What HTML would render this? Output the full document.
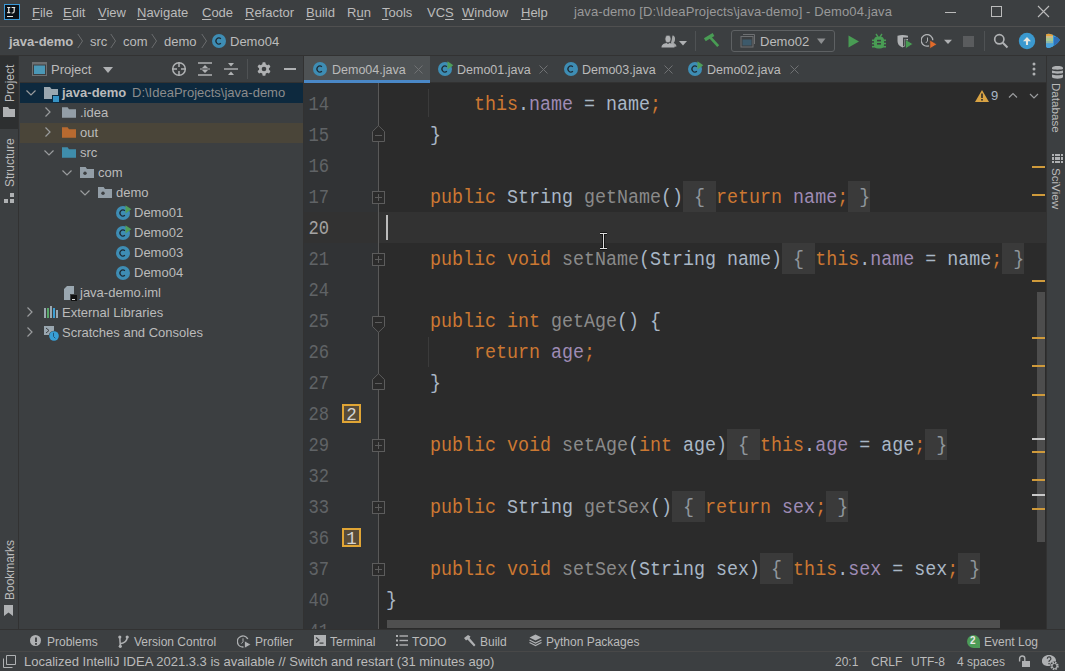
<!DOCTYPE html><html><head><meta charset="utf-8"><style>
*{margin:0;padding:0;box-sizing:border-box}
html,body{width:1065px;height:671px;overflow:hidden;background:#3c3f41}
body{position:relative;font-family:"Liberation Sans",sans-serif;font-size:13px;color:#bbbbbb}
.a{position:absolute}
.txt{position:absolute;white-space:pre;line-height:16px}
.mono{font-family:"Liberation Mono",monospace}
.code{position:absolute;white-space:pre;font-family:"Liberation Mono",monospace;font-size:19.5px;line-height:31px;height:31px;transform:scaleX(0.9402);transform-origin:0 0}
.ln{position:absolute;white-space:pre;font-family:"Liberation Mono",monospace;font-size:19.5px;line-height:31px;height:31px;transform:scaleX(0.88);transform-origin:100% 0}
.k{color:#cc7832}.t{color:#a9b7c6}.g{color:#8a8a8a}.f{color:#9f8bb5}
.b{color:#8f969c}
.u{text-decoration:underline;text-underline-offset:2px}
.vt{position:absolute;white-space:pre;transform-origin:0 0}
</style></head><body>
<div class="a" style="left:0;top:0;width:1065px;height:26px;background:#3c3f41"></div>
<div class="a" style="left:0;top:26px;width:1065px;height:1px;background:#505050"></div>
<svg class="a" style="left:4px;top:4px" width="16" height="16" viewBox="0 0 16 16"><rect x="0.5" y="0.5" width="15" height="15" fill="#0b1117" stroke="#3b9ad9"/><path d="M3.2 3.5H6.3M4.75 3.5V8.5M3.2 8.7H6.3" stroke="#e6e6e0" stroke-width="1.2" fill="none"/><path d="M7.6 3.5H11.2M10.2 3.5V7.3Q10.2 9 8.6 9H7.6" stroke="#e6e6e0" stroke-width="1.2" fill="none"/><rect x="3" y="12" width="6" height="1" fill="#e6e6e0"/></svg>
<div class="txt" style="left:32px;top:5px;color:#bbbbbb"><span class="u">F</span>ile</div>
<div class="txt" style="left:63px;top:5px;color:#bbbbbb"><span class="u">E</span>dit</div>
<div class="txt" style="left:98px;top:5px;color:#bbbbbb"><span class="u">V</span>iew</div>
<div class="txt" style="left:137px;top:5px;color:#bbbbbb"><span class="u">N</span>avigate</div>
<div class="txt" style="left:202px;top:5px;color:#bbbbbb"><span class="u">C</span>ode</div>
<div class="txt" style="left:245px;top:5px;color:#bbbbbb"><span class="u">R</span>efactor</div>
<div class="txt" style="left:306px;top:5px;color:#bbbbbb"><span class="u">B</span>uild</div>
<div class="txt" style="left:347px;top:5px;color:#bbbbbb">R<span class="u">u</span>n</div>
<div class="txt" style="left:382px;top:5px;color:#bbbbbb"><span class="u">T</span>ools</div>
<div class="txt" style="left:427px;top:5px;color:#bbbbbb">VC<span class="u">S</span></div>
<div class="txt" style="left:462px;top:5px;color:#bbbbbb"><span class="u">W</span>indow</div>
<div class="txt" style="left:521px;top:5px;color:#bbbbbb"><span class="u">H</span>elp</div>
<div class="txt" style="left:574px;top:4px;color:#999999;letter-spacing:0.1px">java-demo [D:\IdeaProjects\java-demo] - Demo04.java</div>
<div class="a" style="left:945px;top:12px;width:11px;height:1px;background:#bbb"></div>
<div class="a" style="left:991px;top:6px;width:11px;height:11px;border:1px solid #bbb"></div>
<svg class="a" style="left:1037px;top:5px" width="13" height="13" viewBox="0 0 13 13"><path d="M1 1L12 12M12 1L1 12" stroke="#bbb" stroke-width="1.1"/></svg>
<div class="a" style="left:0;top:55px;width:1065px;height:1px;background:#323232"></div>
<div class="txt" style="left:9px;top:34px;font-weight:bold">java-demo</div>
<svg class="a" style="left:77px;top:33px" width="7" height="16" viewBox="0 0 7 16"><path d="M0.8 1L5.5 8L0.8 15" stroke="#6a6c6e" fill="none" stroke-width="1"/></svg>
<div class="txt" style="left:90px;top:34px">src</div>
<svg class="a" style="left:110px;top:33px" width="7" height="16" viewBox="0 0 7 16"><path d="M0.8 1L5.5 8L0.8 15" stroke="#6a6c6e" fill="none" stroke-width="1"/></svg>
<div class="txt" style="left:123px;top:34px">com</div>
<svg class="a" style="left:151px;top:33px" width="7" height="16" viewBox="0 0 7 16"><path d="M0.8 1L5.5 8L0.8 15" stroke="#6a6c6e" fill="none" stroke-width="1"/></svg>
<div class="txt" style="left:164px;top:34px">demo</div>
<svg class="a" style="left:201px;top:33px" width="7" height="16" viewBox="0 0 7 16"><path d="M0.8 1L5.5 8L0.8 15" stroke="#6a6c6e" fill="none" stroke-width="1"/></svg>
<svg class="a" style="left:210.5px;top:32px" width="18" height="18" viewBox="0 0 18 18"><circle cx="8" cy="9" r="7" fill="#3e8db4"/><path d="M9.9 6.7A3 3 0 1 0 9.9 11.3" stroke="#1d2a33" stroke-width="1.25" fill="none"/></svg>
<div class="txt" style="left:230px;top:34px">Demo04</div>
<svg class="a" style="left:660px;top:34px" width="30" height="15" viewBox="0 0 30 15"><path d="M12.5 1.5C14.8 1.5 15.3 4 15 6C14.7 7.8 14 8.5 13.6 9C15 9.6 16.5 10.5 16.5 12.5L13 13L11 9Z" fill="#afb1b3" opacity="0.9"/><ellipse cx="8" cy="5" rx="3.1" ry="3.9" fill="#afb1b3" stroke="#3c3f41" stroke-width="0.8"/><path d="M1.5 13.5C1.5 10.5 4 9.5 6.5 9L8 10L9.5 9C12 9.5 14.5 10.5 14.5 13.5Z" fill="#afb1b3"/><path d="M19 7L27 7L23 11.5Z" fill="#afb1b3"/></svg>
<div class="a" style="left:695px;top:31px;width:1px;height:20px;background:#4f5254"></div>
<svg class="a" style="left:703px;top:33px" width="17" height="16" viewBox="0 0 17 16"><path d="M1.8 6.8L10.5 1.5" stroke="#499c54" stroke-width="3.4"/><path d="M7 4.2L15.2 13.2" stroke="#499c54" stroke-width="2.7"/></svg>
<div class="a" style="left:731px;top:30px;width:104px;height:22px;border:1px solid #5e6163;border-radius:3px"></div>
<svg class="a" style="left:740px;top:33px" width="16" height="16" viewBox="0 0 16 16"><path d="M3 1.5H14.5V11" stroke="#6e7072" fill="none"/><rect x="1" y="3.5" width="12" height="10.5" fill="#3c3f41" stroke="#6e7072"/><rect x="2.5" y="6.5" width="9" height="6" fill="#3d5a6b"/></svg>
<div class="txt" style="left:760px;top:34px">Demo02</div>
<svg class="a" style="left:816px;top:37px" width="11" height="8" viewBox="0 0 11 8"><path d="M1 1.5L9.5 1.5L5.25 7Z" fill="#8c8e90"/></svg>
<svg class="a" style="left:848px;top:35px" width="12" height="13" viewBox="0 0 12 13"><path d="M0.5 0.5L11 6.5L0.5 12.5Z" fill="#499c54"/></svg>
<svg class="a" style="left:872px;top:33px" width="14" height="16" viewBox="0 0 14 16"><path d="M4 1L6 3.8M10 1L8 3.8" stroke="#499c54" stroke-width="1.4"/><rect x="2" y="3.5" width="10" height="12" rx="4" fill="#499c54"/><g fill="#499c54"><rect x="0" y="6.5" width="14" height="1.6"/><rect x="0" y="9.7" width="14" height="1.6"/><rect x="0" y="12.9" width="14" height="1.6"/></g><rect x="5" y="6.8" width="4" height="1.6" fill="#3c3f41"/><rect x="5" y="10" width="4" height="1.6" fill="#3c3f41"/></svg>
<svg class="a" style="left:897px;top:34px" width="17" height="16" viewBox="0 0 17 16"><path d="M0.5 1.8Q5.5 0 11 1.8V7Q11 11.5 5.5 13.5Q0.5 11.5 0.5 7Z" fill="#afb1b3"/><path d="M6 3.5H11V5H7.5V11.5L6 12.5Z" fill="#3c3f41"/><path d="M8.5 5.5L16 10L8.5 14.8Z" fill="#499c54" stroke="#3c3f41" stroke-width="0.8"/></svg>
<svg class="a" style="left:921px;top:34px" width="17" height="16" viewBox="0 0 17 16"><path d="M11.8 6.2A5.8 5.8 0 1 0 8 11.8" stroke="#afb1b3" stroke-width="1.3" fill="none"/><path d="M6.5 3.5V7L4.8 9" stroke="#afb1b3" stroke-width="1" fill="none"/><path d="M8.8 6L16 10.3L8.8 14.8Z" fill="#e26b2a" stroke="#3c3f41" stroke-width="0.8"/></svg>
<svg class="a" style="left:943px;top:38px" width="10" height="8" viewBox="0 0 10 8"><path d="M1 1.8L9 1.8L5 6Z" fill="#afb1b3"/></svg>
<div class="a" style="left:963px;top:36px;width:11px;height:11px;background:#5a5c5e"></div>
<div class="a" style="left:984px;top:31px;width:1px;height:20px;background:#4f5254"></div>
<svg class="a" style="left:993px;top:33px" width="16" height="16" viewBox="0 0 16 16"><circle cx="6.3" cy="6.3" r="4.6" fill="none" stroke="#afb1b3" stroke-width="1.7"/><path d="M9.8 9.8L14.5 14.5" stroke="#afb1b3" stroke-width="2"/></svg>
<svg class="a" style="left:1018px;top:32px" width="18" height="18" viewBox="0 0 18 18"><circle cx="9" cy="9" r="8.2" fill="#3b99cf"/><path d="M9 13V7.5" stroke="#e6e6df" stroke-width="2.1"/><path d="M5 9.2L9 5L13 9.2Z" fill="#e6e6df"/></svg>
<svg class="a" style="left:1045px;top:33px" width="16" height="16" viewBox="0 0 16 16"><defs><clipPath id="tb"><path d="M1 1.5Q2 0.5 4 0.7Q10 1.5 15 7Q11 13 4 15Q1.5 15 1 13.5Z"/></clipPath></defs><g clip-path="url(#tb)"><rect x="0" y="0" width="16" height="16" fill="#3a9ad6"/><rect x="9" y="4" width="7" height="8" fill="#2f6fb8"/><rect x="0" y="0" width="8" height="3" fill="#e6a23a"/><rect x="0" y="3" width="8" height="2" fill="#cbb98a"/><rect x="0" y="5" width="8" height="3" fill="#a8c88e"/><rect x="0" y="8" width="8" height="2.5" fill="#8fb7a8"/><rect x="0" y="10.5" width="8" height="5" fill="#4aa3dc"/></g></svg>
<div class="a" style="left:0;top:56px;width:19px;height:573px;background:#3c3f41"></div>
<div class="a" style="left:0;top:56px;width:18px;height:73px;background:#2d2f30"></div>
<div class="a" style="left:18px;top:56px;width:1px;height:573px;background:#323232"></div>
<div class="vt" style="left:3px;top:102px;transform:rotate(-90deg);color:#bbbbbb;line-height:14px;font-size:12px">Project</div>
<svg class="a" style="left:2px;top:106px" width="14" height="12" viewBox="0 0 14 12"><path d="M1 1H6L7.5 3H13V11H1Z" fill="#afb1b3"/></svg>
<div class="vt" style="left:3px;top:187px;transform:rotate(-90deg);color:#bbbbbb;line-height:14px;font-size:12px">Structure</div>
<svg class="a" style="left:3px;top:192px" width="12" height="12" viewBox="0 0 12 12"><g fill="#afb1b3"><rect x="7" y="1" width="4" height="4"/><rect x="1" y="7" width="4" height="4"/><rect x="7" y="7" width="4" height="4"/></g></svg>
<div class="vt" style="left:3px;top:600px;transform:rotate(-90deg);color:#bbbbbb;line-height:14px;font-size:12px">Bookmarks</div>
<svg class="a" style="left:4px;top:605px" width="9" height="12" viewBox="0 0 9 12"><path d="M0 0H9V11L4.5 7.5L0 11Z" fill="#afb1b3"/></svg>
<div class="a" style="left:20px;top:56px;width:283px;height:573px;background:#3c3f41"></div>
<div class="a" style="left:303px;top:56px;width:1px;height:573px;background:#323232"></div>
<svg class="a" style="left:32px;top:62px" width="15" height="14" viewBox="0 0 15 14"><rect x="0.5" y="0.5" width="14" height="13" fill="none" stroke="#6e7072"/><rect x="0.5" y="0.5" width="14" height="2" fill="#6e7072"/><rect x="2" y="3.5" width="11" height="8.5" fill="#4b98b7"/></svg>
<div class="txt" style="left:51px;top:62px">Project</div>
<svg class="a" style="left:103px;top:66px" width="10" height="8" viewBox="0 0 10 8"><path d="M0 1H10L5 7Z" fill="#afb1b3"/></svg>
<svg class="a" style="left:171px;top:61px" width="16" height="16" viewBox="0 0 16 16"><circle cx="8" cy="8" r="6.3" fill="none" stroke="#afb1b3" stroke-width="1.5"/><path d="M8 1V6M8 10V15M1 8H6M10 8H15" stroke="#afb1b3" stroke-width="1.5"/></svg>
<svg class="a" style="left:198px;top:62px" width="14" height="14" viewBox="0 0 14 14"><path d="M0 1H14M0 13H14" stroke="#afb1b3" stroke-width="1.4"/><path d="M4 6L7 3L10 6Z M4 8L7 11L10 8Z" fill="#afb1b3"/><path d="M2 7H12" stroke="#afb1b3" stroke-width="1"/></svg>
<svg class="a" style="left:224px;top:62px" width="14" height="14" viewBox="0 0 14 14"><path d="M0 7H14" stroke="#afb1b3" stroke-width="1.4"/><path d="M4 1L7 4.5L10 1Z M4 13L7 9.5L10 13Z" fill="#afb1b3"/></svg>
<div class="a" style="left:247px;top:59px;width:1px;height:20px;background:#4f5254"></div>
<svg class="a" style="left:257px;top:62px" width="14" height="14" viewBox="0 0 14 14"><g fill="#afb1b3"><circle cx="7" cy="7" r="5"/><rect x="5.4" y="0.3" width="3.2" height="13.4" rx="0.8"/><rect x="5.4" y="0.3" width="3.2" height="13.4" rx="0.8" transform="rotate(60 7 7)"/><rect x="5.4" y="0.3" width="3.2" height="13.4" rx="0.8" transform="rotate(120 7 7)"/></g><circle cx="7" cy="7" r="2.3" fill="#3c3f41"/></svg>
<div class="a" style="left:284px;top:68px;width:12px;height:2px;background:#afb1b3"></div>
<div class="a" style="left:20px;top:82px;width:283px;height:1px;background:#323232"></div>
<div class="a" style="left:20px;top:83px;width:283px;height:20px;background:#0d293e"></div>
<div class="a" style="left:20px;top:123px;width:283px;height:20px;background:#4a4539"></div>
<svg class="a" style="left:26px;top:90px" width="10" height="6" viewBox="0 0 10 6"><path d="M0.5 0.5L5 5L9.5 0.5" stroke="#9a9c9e" fill="none" stroke-width="1.2"/></svg>
<svg class="a" style="left:44px;top:87px" width="15" height="15" viewBox="0 0 15 15"><path d="M0 0H6L7.5 2H14V12H0Z" fill="#9aa7b0"/><rect x="8" y="8" width="7" height="7" fill="#0d293e"/><rect x="9" y="9" width="6" height="6" fill="#3592c4"/></svg>
<div class="txt" style="left:62px;top:85px;font-weight:bold">java-demo</div>
<div class="txt" style="left:132px;top:85px;color:#8c8c8c">D:\IdeaProjects\java-demo</div>
<svg class="a" style="left:45px;top:107px" width="6" height="10" viewBox="0 0 6 10"><path d="M0.5 0.5L5 5L0.5 9.5" stroke="#9a9c9e" fill="none" stroke-width="1.2"/></svg>
<svg class="a" style="left:62px;top:107px" width="14" height="11" viewBox="0 0 15 11"><path d="M0 0H6L7.5 2H15V11H0Z" fill="#939ea7"/></svg>
<div class="txt" style="left:80px;top:105px">.idea</div>
<svg class="a" style="left:45px;top:127px" width="6" height="10" viewBox="0 0 6 10"><path d="M0.5 0.5L5 5L0.5 9.5" stroke="#9a9c9e" fill="none" stroke-width="1.2"/></svg>
<svg class="a" style="left:62px;top:127px" width="14" height="11" viewBox="0 0 15 11"><path d="M0 0H6L7.5 2H15V11H0Z" fill="#b86a30"/></svg>
<div class="txt" style="left:80px;top:125px">out</div>
<svg class="a" style="left:44px;top:150px" width="10" height="6" viewBox="0 0 10 6"><path d="M0.5 0.5L5 5L9.5 0.5" stroke="#9a9c9e" fill="none" stroke-width="1.2"/></svg>
<svg class="a" style="left:62px;top:147px" width="14" height="11" viewBox="0 0 15 11"><path d="M0 0H6L7.5 2H15V11H0Z" fill="#3f8dab"/></svg>
<div class="txt" style="left:80px;top:145px">src</div>
<svg class="a" style="left:62px;top:170px" width="10" height="6" viewBox="0 0 10 6"><path d="M0.5 0.5L5 5L9.5 0.5" stroke="#9a9c9e" fill="none" stroke-width="1.2"/></svg>
<svg class="a" style="left:80px;top:167px" width="14" height="11" viewBox="0 0 14 11"><path d="M0 0H5.6L7 2H14V11H0Z" fill="#939ea7"/><circle cx="5" cy="6.3" r="1.7" fill="#3c3f41"/></svg>
<div class="txt" style="left:98px;top:165px">com</div>
<svg class="a" style="left:80px;top:190px" width="10" height="6" viewBox="0 0 10 6"><path d="M0.5 0.5L5 5L9.5 0.5" stroke="#9a9c9e" fill="none" stroke-width="1.2"/></svg>
<svg class="a" style="left:98px;top:187px" width="14" height="11" viewBox="0 0 14 11"><path d="M0 0H5.6L7 2H14V11H0Z" fill="#939ea7"/><circle cx="5" cy="6.3" r="1.7" fill="#3c3f41"/></svg>
<div class="txt" style="left:116px;top:185px">demo</div>
<svg class="a" style="left:115px;top:204px" width="18" height="18" viewBox="0 0 18 18"><circle cx="8" cy="9" r="7" fill="#3e8db4"/><path d="M9.9 6.7A3 3 0 1 0 9.9 11.3" stroke="#1d2a33" stroke-width="1.25" fill="none"/><path d="M10.5 1.2L16.3 5.3L10.5 9.4Z" fill="#4f9e5a"/></svg>
<div class="txt" style="left:134px;top:205px">Demo01</div>
<svg class="a" style="left:115px;top:224px" width="18" height="18" viewBox="0 0 18 18"><circle cx="8" cy="9" r="7" fill="#3e8db4"/><path d="M9.9 6.7A3 3 0 1 0 9.9 11.3" stroke="#1d2a33" stroke-width="1.25" fill="none"/><path d="M10.5 1.2L16.3 5.3L10.5 9.4Z" fill="#4f9e5a"/></svg>
<div class="txt" style="left:134px;top:225px">Demo02</div>
<svg class="a" style="left:115px;top:244px" width="18" height="18" viewBox="0 0 18 18"><circle cx="8" cy="9" r="7" fill="#3e8db4"/><path d="M9.9 6.7A3 3 0 1 0 9.9 11.3" stroke="#1d2a33" stroke-width="1.25" fill="none"/></svg>
<div class="txt" style="left:134px;top:245px">Demo03</div>
<svg class="a" style="left:115px;top:264px" width="18" height="18" viewBox="0 0 18 18"><circle cx="8" cy="9" r="7" fill="#3e8db4"/><path d="M9.9 6.7A3 3 0 1 0 9.9 11.3" stroke="#1d2a33" stroke-width="1.25" fill="none"/></svg>
<div class="txt" style="left:134px;top:265px">Demo04</div>
<svg class="a" style="left:64px;top:286px" width="14" height="15" viewBox="0 0 14 15"><path d="M3 0H10V14H0V3Z" fill="#9aa7b0"/><rect x="6" y="8" width="8" height="7" fill="#3c3f41"/><rect x="7" y="9" width="6" height="6" fill="#111"/><rect x="8" y="13" width="3" height="1" fill="#ddd"/></svg>
<div class="txt" style="left:80px;top:285px">java-demo.iml</div>
<svg class="a" style="left:27px;top:307px" width="6" height="10" viewBox="0 0 6 10"><path d="M0.5 0.5L5 5L0.5 9.5" stroke="#9a9c9e" fill="none" stroke-width="1.2"/></svg>
<svg class="a" style="left:44px;top:306px" width="14" height="13" viewBox="0 0 14 13"><rect x="0" y="2" width="2" height="10" fill="#9aa7b0"/><rect x="3" y="2" width="2" height="10" fill="#59a869"/><rect x="6" y="0" width="2" height="12" fill="#9aa7b0"/><rect x="9" y="2" width="2" height="10" fill="#3d9fd4"/><rect x="12" y="4" width="2" height="8" fill="#9aa7b0"/></svg>
<div class="txt" style="left:62px;top:305px">External Libraries</div>
<svg class="a" style="left:27px;top:327px" width="6" height="10" viewBox="0 0 6 10"><path d="M0.5 0.5L5 5L0.5 9.5" stroke="#9a9c9e" fill="none" stroke-width="1.2"/></svg>
<svg class="a" style="left:44px;top:326px" width="16" height="16" viewBox="0 0 16 16"><rect x="0" y="0" width="10" height="9" fill="#9aa7b0"/><path d="M2 2L5 4.5L2 7" stroke="#3c3f41" fill="none" stroke-width="1"/><circle cx="10" cy="10" r="5.3" fill="#3c3f41"/><circle cx="10" cy="10" r="4.8" fill="#389fd6"/><path d="M9.5 6.8V10.5L11.3 12.3" stroke="#23577a" fill="none" stroke-width="1"/></svg>
<div class="txt" style="left:62px;top:325px">Scratches and Consoles</div>
<div class="a" style="left:304px;top:56px;width:742px;height:26px;background:#3c3f41"></div>
<div class="a" style="left:304px;top:56px;width:126px;height:26px;background:#4e5254"></div>
<div class="a" style="left:304px;top:80px;width:126px;height:3px;background:#4a88c7"></div>
<div class="a" style="left:430px;top:82px;width:616px;height:1px;background:#323232"></div>
<svg class="a" style="left:312px;top:60px" width="18" height="18" viewBox="0 0 18 18"><circle cx="8" cy="9" r="7" fill="#3e8db4"/><path d="M9.9 6.7A3 3 0 1 0 9.9 11.3" stroke="#1d2a33" stroke-width="1.25" fill="none"/></svg>
<div class="txt" style="left:332px;top:62px;font-size:12.5px">Demo04.java</div>
<svg class="a" style="left:414px;top:65px" width="9" height="9" viewBox="0 0 9 9"><path d="M0.5 0.5L8.5 8.5M8.5 0.5L0.5 8.5" stroke="#6f7173" stroke-width="1"/></svg>
<svg class="a" style="left:437px;top:60px" width="18" height="18" viewBox="0 0 18 18"><circle cx="8" cy="9" r="7" fill="#3e8db4"/><path d="M9.9 6.7A3 3 0 1 0 9.9 11.3" stroke="#1d2a33" stroke-width="1.25" fill="none"/><path d="M10.5 1.2L16.3 5.3L10.5 9.4Z" fill="#4f9e5a"/></svg>
<div class="txt" style="left:457px;top:62px;font-size:12.5px">Demo01.java</div>
<svg class="a" style="left:539px;top:65px" width="9" height="9" viewBox="0 0 9 9"><path d="M0.5 0.5L8.5 8.5M8.5 0.5L0.5 8.5" stroke="#6f7173" stroke-width="1"/></svg>
<svg class="a" style="left:563px;top:60px" width="18" height="18" viewBox="0 0 18 18"><circle cx="8" cy="9" r="7" fill="#3e8db4"/><path d="M9.9 6.7A3 3 0 1 0 9.9 11.3" stroke="#1d2a33" stroke-width="1.25" fill="none"/></svg>
<div class="txt" style="left:582px;top:62px;font-size:12.5px">Demo03.java</div>
<svg class="a" style="left:664px;top:65px" width="9" height="9" viewBox="0 0 9 9"><path d="M0.5 0.5L8.5 8.5M8.5 0.5L0.5 8.5" stroke="#6f7173" stroke-width="1"/></svg>
<svg class="a" style="left:687px;top:60px" width="18" height="18" viewBox="0 0 18 18"><circle cx="8" cy="9" r="7" fill="#3e8db4"/><path d="M9.9 6.7A3 3 0 1 0 9.9 11.3" stroke="#1d2a33" stroke-width="1.25" fill="none"/><path d="M10.5 1.2L16.3 5.3L10.5 9.4Z" fill="#4f9e5a"/></svg>
<div class="txt" style="left:707px;top:62px;font-size:12.5px">Demo02.java</div>
<svg class="a" style="left:790px;top:65px" width="9" height="9" viewBox="0 0 9 9"><path d="M0.5 0.5L8.5 8.5M8.5 0.5L0.5 8.5" stroke="#6f7173" stroke-width="1"/></svg>
<svg class="a" style="left:1031px;top:62px" width="6" height="14" viewBox="0 0 6 14"><g fill="#afb1b3"><circle cx="3" cy="2" r="1.5"/><circle cx="3" cy="7" r="1.5"/><circle cx="3" cy="12" r="1.5"/></g></svg>
<div class="a" style="left:304px;top:83px;width:742px;height:546px;background:#2b2b2b;overflow:hidden" id="ed">
<div class="a" style="left:0;top:0;width:75px;height:546px;background:#313335"></div>
<div class="a" style="left:0;top:129px;width:75px;height:31px;background:#323232"></div>
<div class="a" style="left:75px;top:129px;width:667px;height:31px;background:#323232"></div>
<div class="a" style="left:74px;top:0;width:1px;height:546px;background:#595959"></div>
<div class="ln" style="left:0;top:7px;width:25px;text-align:right;color:#606366">14</div>
<div class="code" style="left:82px;top:7px">        <span class="k">this</span><span class="t">.</span><span class="f">name</span><span class="t"> = </span><span class="t">name</span><span class="k">;</span></div>
<div class="ln" style="left:0;top:38px;width:25px;text-align:right;color:#606366">15</div>
<div class="code" style="left:82px;top:38px">    <span class="t">}</span></div>
<div class="ln" style="left:0;top:69px;width:25px;text-align:right;color:#606366">16</div>
<div class="ln" style="left:0;top:100px;width:25px;text-align:right;color:#606366">17</div>
<div class="a" style="left:379px;top:98px;width:33px;height:31px;background:#3a3a3a"></div>
<div class="a" style="left:544px;top:98px;width:22px;height:31px;background:#3a3a3a"></div>
<div class="code" style="left:82px;top:100px">    <span class="k">public</span><span class="t"> </span><span class="t">String</span><span class="t"> </span><span class="g">getName</span><span class="t">()</span><span class="b"> { </span><span class="k">return</span><span class="t"> </span><span class="f">name</span><span class="k">;</span><span class="b"> }</span></div>
<div class="ln" style="left:0;top:131px;width:25px;text-align:right;color:#a4a3a3">20</div>
<div class="ln" style="left:0;top:162px;width:25px;text-align:right;color:#606366">21</div>
<div class="a" style="left:478px;top:160px;width:33px;height:31px;background:#3a3a3a"></div>
<div class="a" style="left:698px;top:160px;width:22px;height:31px;background:#3a3a3a"></div>
<div class="code" style="left:82px;top:162px">    <span class="k">public</span><span class="t"> </span><span class="k">void</span><span class="t"> </span><span class="g">setName</span><span class="t">(</span><span class="t">String</span><span class="t"> name)</span><span class="b"> { </span><span class="k">this</span><span class="t">.</span><span class="f">name</span><span class="t"> = name</span><span class="k">;</span><span class="b"> }</span></div>
<div class="ln" style="left:0;top:193px;width:25px;text-align:right;color:#606366">24</div>
<div class="ln" style="left:0;top:224px;width:25px;text-align:right;color:#606366">25</div>
<div class="code" style="left:82px;top:224px">    <span class="k">public</span><span class="t"> </span><span class="k">int</span><span class="t"> </span><span class="g">getAge</span><span class="t">() {</span></div>
<div class="ln" style="left:0;top:255px;width:25px;text-align:right;color:#606366">26</div>
<div class="code" style="left:82px;top:255px">        <span class="k">return</span><span class="t"> </span><span class="f">age</span><span class="k">;</span></div>
<div class="ln" style="left:0;top:286px;width:25px;text-align:right;color:#606366">27</div>
<div class="code" style="left:82px;top:286px">    <span class="t">}</span></div>
<div class="ln" style="left:0;top:317px;width:25px;text-align:right;color:#606366">28</div>
<div class="ln" style="left:0;top:348px;width:25px;text-align:right;color:#606366">29</div>
<div class="a" style="left:423px;top:346px;width:33px;height:31px;background:#3a3a3a"></div>
<div class="a" style="left:621px;top:346px;width:22px;height:31px;background:#3a3a3a"></div>
<div class="code" style="left:82px;top:348px">    <span class="k">public</span><span class="t"> </span><span class="k">void</span><span class="t"> </span><span class="g">setAge</span><span class="t">(</span><span class="k">int</span><span class="t"> age)</span><span class="b"> { </span><span class="k">this</span><span class="t">.</span><span class="f">age</span><span class="t"> = age</span><span class="k">;</span><span class="b"> }</span></div>
<div class="ln" style="left:0;top:379px;width:25px;text-align:right;color:#606366">32</div>
<div class="ln" style="left:0;top:410px;width:25px;text-align:right;color:#606366">33</div>
<div class="a" style="left:368px;top:408px;width:33px;height:31px;background:#3a3a3a"></div>
<div class="a" style="left:522px;top:408px;width:22px;height:31px;background:#3a3a3a"></div>
<div class="code" style="left:82px;top:410px">    <span class="k">public</span><span class="t"> </span><span class="t">String</span><span class="t"> </span><span class="g">getSex</span><span class="t">()</span><span class="b"> { </span><span class="k">return</span><span class="t"> </span><span class="f">sex</span><span class="k">;</span><span class="b"> }</span></div>
<div class="ln" style="left:0;top:441px;width:25px;text-align:right;color:#606366">36</div>
<div class="ln" style="left:0;top:472px;width:25px;text-align:right;color:#606366">37</div>
<div class="a" style="left:456px;top:470px;width:33px;height:31px;background:#3a3a3a"></div>
<div class="a" style="left:654px;top:470px;width:22px;height:31px;background:#3a3a3a"></div>
<div class="code" style="left:82px;top:472px">    <span class="k">public</span><span class="t"> </span><span class="k">void</span><span class="t"> </span><span class="g">setSex</span><span class="t">(</span><span class="t">String</span><span class="t"> sex)</span><span class="b"> { </span><span class="k">this</span><span class="t">.</span><span class="f">sex</span><span class="t"> = sex</span><span class="k">;</span><span class="b"> }</span></div>
<div class="ln" style="left:0;top:503px;width:25px;text-align:right;color:#606366">40</div>
<div class="code" style="left:82px;top:503px"><span class="t">}</span></div>
<div class="ln" style="left:0;top:534px;width:25px;text-align:right;color:#606366">41</div>
<div class="a" style="left:82px;top:132px;width:2px;height:25px;background:#bbbbbb"></div>
<div class="a" style="left:124px;top:6px;width:1px;height:28px;background:#3b3b3b"></div>
<div class="a" style="left:124px;top:254px;width:1px;height:30px;background:#3b3b3b"></div>
<svg class="a" style="left:68px;top:42px" width="13" height="17" viewBox="0 0 13 17"><path d="M0.5 16.5V6.5L6.5 0.7L12.5 6.5V16.5Z" fill="#2b2b2b" stroke="#5c5c5c"/><path d="M3 10.5H10" stroke="#5c5c5c"/></svg>
<svg class="a" style="left:68px;top:108px" width="13" height="13" viewBox="0 0 13 13"><rect x="0.5" y="0.5" width="12" height="12" fill="#2b2b2b" stroke="#5c5c5c"/><path d="M3 6.5H10M6.5 3V10" stroke="#5c5c5c"/></svg>
<svg class="a" style="left:68px;top:170px" width="13" height="13" viewBox="0 0 13 13"><rect x="0.5" y="0.5" width="12" height="12" fill="#2b2b2b" stroke="#5c5c5c"/><path d="M3 6.5H10M6.5 3V10" stroke="#5c5c5c"/></svg>
<svg class="a" style="left:68px;top:356px" width="13" height="13" viewBox="0 0 13 13"><rect x="0.5" y="0.5" width="12" height="12" fill="#2b2b2b" stroke="#5c5c5c"/><path d="M3 6.5H10M6.5 3V10" stroke="#5c5c5c"/></svg>
<svg class="a" style="left:68px;top:418px" width="13" height="13" viewBox="0 0 13 13"><rect x="0.5" y="0.5" width="12" height="12" fill="#2b2b2b" stroke="#5c5c5c"/><path d="M3 6.5H10M6.5 3V10" stroke="#5c5c5c"/></svg>
<svg class="a" style="left:68px;top:480px" width="13" height="13" viewBox="0 0 13 13"><rect x="0.5" y="0.5" width="12" height="12" fill="#2b2b2b" stroke="#5c5c5c"/><path d="M3 6.5H10M6.5 3V10" stroke="#5c5c5c"/></svg>
<svg class="a" style="left:68px;top:233px" width="13" height="17" viewBox="0 0 13 17"><path d="M0.5 0.5V10.5L6.5 16.3L12.5 10.5V0.5Z" fill="#2b2b2b" stroke="#5c5c5c"/><path d="M3 6.5H10" stroke="#5c5c5c"/></svg>
<svg class="a" style="left:68px;top:290px" width="13" height="17" viewBox="0 0 13 17"><path d="M0.5 16.5V6.5L6.5 0.7L12.5 6.5V16.5Z" fill="#2b2b2b" stroke="#5c5c5c"/><path d="M3 10.5H10" stroke="#5c5c5c"/></svg>
<div class="a" style="left:38px;top:321px;width:19px;height:19px;border:2px solid #e0a535;background:#594c39"></div>
<div class="a mono" style="left:38px;top:323px;width:19px;height:19px;line-height:19px;text-align:center;color:#d4d4d4;font-size:17.5px">2</div>
<div class="a" style="left:38px;top:445px;width:19px;height:19px;border:2px solid #e0a535;background:#594c39"></div>
<div class="a mono" style="left:38px;top:447px;width:19px;height:19px;line-height:19px;text-align:center;color:#d4d4d4;font-size:17.5px">1</div>
<svg class="a" style="left:671px;top:7px" width="14" height="12" viewBox="0 0 14 12"><path d="M7 0L14 12H0Z" fill="#d9a343"/><rect x="6.2" y="3.5" width="1.6" height="4.5" fill="#2b2b2b"/><rect x="6.2" y="9" width="1.6" height="1.6" fill="#2b2b2b"/></svg>
<div class="txt" style="left:687px;top:5px;color:#a9b7c6">9</div>
<svg class="a" style="left:704px;top:9px" width="10" height="7" viewBox="0 0 10 7"><path d="M1 5.5L5 1.5L9 5.5" stroke="#9a9c9e" fill="none" stroke-width="1.2"/></svg>
<svg class="a" style="left:725px;top:10px" width="10" height="7" viewBox="0 0 10 7"><path d="M1 1L5 5L9 1" stroke="#9a9c9e" fill="none" stroke-width="1.2"/></svg>
<div class="a" style="left:733px;top:209px;width:8px;height:250px;background:#4d4d4d;border-radius:0"></div>
<div class="a" style="left:728px;top:83px;width:13px;height:2px;background:#cf9a3b"></div>
<div class="a" style="left:728px;top:111px;width:13px;height:2px;background:#cf9a3b"></div>
<div class="a" style="left:728px;top:197px;width:13px;height:2px;background:#cf9a3b"></div>
<div class="a" style="left:728px;top:254px;width:13px;height:2px;background:#cf9a3b"></div>
<div class="a" style="left:728px;top:282px;width:13px;height:2px;background:#cf9a3b"></div>
<div class="a" style="left:728px;top:311px;width:13px;height:2px;background:#cf9a3b"></div>
<div class="a" style="left:728px;top:368px;width:13px;height:2px;background:#cf9a3b"></div>
<div class="a" style="left:728px;top:396px;width:13px;height:2px;background:#cf9a3b"></div>
<div class="a" style="left:728px;top:425px;width:13px;height:2px;background:#cf9a3b"></div>
<div class="a" style="left:728px;top:355px;width:13px;height:2px;background:#c8c8c8"></div>
<div class="a" style="left:728px;top:411px;width:13px;height:2px;background:#c8c8c8"></div>
<div class="a" style="left:83px;top:537px;width:613px;height:8px;background:#4f4f4f"></div>
</div>
<svg class="a" style="left:598px;top:231px" width="11" height="20" viewBox="0 0 11 20"><path d="M2 2.5H9M5.5 3V17M2 17.5H9" stroke="#000" stroke-width="3" opacity="0.6"/><path d="M2 2.5H9M5.5 3V17M2 17.5H9" stroke="#dcdcdc" stroke-width="1"/></svg>
<div class="a" style="left:1046px;top:56px;width:1px;height:573px;background:#323232"></div>
<svg class="a" style="left:1052px;top:66px" width="11" height="13" viewBox="0 0 11 13"><g fill="#afb1b3"><path d="M0 1.6C0 -0.5 11 -0.5 11 1.6V2.8C11 4 0 4 0 2.8Z"/><path d="M0 4.6C2 5.6 9 5.6 11 4.6V6.8C11 8 0 8 0 6.8Z"/><path d="M0 8.6C2 9.6 9 9.6 11 8.6V11C11 13.2 0 13.2 0 11Z"/></g></svg>
<div class="vt" style="left:1063px;top:83px;transform:rotate(90deg);line-height:14px;font-size:11.6px">Database</div>
<svg class="a" style="left:1052px;top:154px" width="11" height="9" viewBox="0 0 11 9"><g fill="#afb1b3"><rect x="0" y="0" width="2" height="2"/><rect x="3" y="0" width="5" height="2"/><rect x="9" y="0" width="2" height="2"/><rect x="0" y="3" width="2" height="3"/><rect x="3" y="3" width="5" height="3"/><rect x="9" y="3" width="2" height="3"/><rect x="0" y="7" width="2" height="2"/><rect x="3" y="7" width="5" height="2"/><rect x="9" y="7" width="2" height="2"/></g></svg>
<div class="vt" style="left:1063px;top:168px;transform:rotate(90deg);line-height:14px;font-size:11.6px">SciView</div>
<div class="a" style="left:0;top:629px;width:1065px;height:1px;background:#323232"></div>
<div class="a" style="left:0;top:651px;width:1065px;height:1px;background:#484848"></div>
<div class="txt" style="left:47px;top:634px;font-size:12px">Problems</div>
<div class="txt" style="left:134px;top:634px;font-size:12px">Version Control</div>
<div class="txt" style="left:255px;top:634px;font-size:12px">Profiler</div>
<div class="txt" style="left:330px;top:634px;font-size:12px">Terminal</div>
<div class="txt" style="left:412px;top:634px;font-size:12px">TODO</div>
<div class="txt" style="left:480px;top:634px;font-size:12px">Build</div>
<div class="txt" style="left:546px;top:634px;font-size:12px">Python Packages</div>
<svg class="a" style="left:30px;top:635px" width="12" height="12" viewBox="0 0 12 12"><circle cx="5.5" cy="5.5" r="5.5" fill="#afb1b3"/><rect x="5.1" y="2.5" width="1.8" height="4.5" fill="#3c3f41"/><rect x="5.1" y="8" width="1.8" height="1.8" fill="#3c3f41"/></svg>
<svg class="a" style="left:118px;top:635px" width="11" height="13" viewBox="0 0 11 13"><g stroke="#afb1b3" stroke-width="1.5" fill="none"><path d="M1.8 2L2.3 11.3"/><path d="M9.2 2Q9.2 7.5 2.3 8.8"/></g><g fill="#afb1b3"><circle cx="1.8" cy="2" r="1.6"/><circle cx="9.2" cy="2" r="1.6"/><circle cx="2.3" cy="11.3" r="1.6"/></g></svg>
<svg class="a" style="left:237px;top:635px" width="15" height="14" viewBox="0 0 15 14"><path d="M10.8 4A5.5 5.5 0 1 0 6.5 12" stroke="#afb1b3" stroke-width="1.4" fill="none"/><path d="M6 3.3V6.8L4.3 8.6" stroke="#afb1b3" stroke-width="1" fill="none"/><path d="M7.5 5.8L14 9.5L7.5 13.3Z" fill="#afb1b3" stroke="#3c3f41" stroke-width="0.8"/></svg>
<svg class="a" style="left:314px;top:635px" width="12" height="11" viewBox="0 0 12 11"><rect x="0" y="0" width="12" height="11" fill="#afb1b3"/><path d="M2 2.5L5 5L2 7.5" stroke="#3c3f41" fill="none" stroke-width="1.2"/><rect x="5.5" y="7.5" width="4" height="1.2" fill="#3c3f41"/></svg>
<svg class="a" style="left:396px;top:635px" width="12" height="11" viewBox="0 0 12 11"><g fill="#afb1b3"><rect x="0" y="0" width="2" height="2"/><rect x="0" y="4.5" width="2" height="2"/><rect x="0" y="9" width="2" height="2"/><rect x="3.5" y="0.3" width="8.5" height="1.4"/><rect x="3.5" y="4.8" width="8.5" height="1.4"/><rect x="3.5" y="9.3" width="8.5" height="1.4"/></g></svg>
<svg class="a" style="left:463px;top:634px" width="13" height="13" viewBox="0 0 13 13"><path d="M1 4L5 1L7.5 2.5L6.5 4L12.5 11L11 12.5L4.5 5.5L3 6.5Z" fill="#afb1b3"/></svg>
<svg class="a" style="left:529px;top:634px" width="13" height="13" viewBox="0 0 13 13"><path d="M6.5 0.5L12.5 3.5L6.5 6.5L0.5 3.5Z" fill="#afb1b3"/><path d="M0.5 6L6.5 9L12.5 6M0.5 8.5L6.5 11.5L12.5 8.5" stroke="#afb1b3" fill="none" stroke-width="1.2"/></svg>
<svg class="a" style="left:967px;top:635px" width="14" height="14" viewBox="0 0 14 14"><path d="M13 13H6.5A6.5 6.5 0 1 1 13 6.5Z" fill="#4c9b57"/></svg>
<div class="txt" style="left:970px;top:635px;font-size:10px;color:#e8e8e8;line-height:12px;font-weight:bold">2</div>
<div class="txt" style="left:984px;top:634px;font-size:12px">Event Log</div>
<svg class="a" style="left:3px;top:655px" width="13" height="13" viewBox="0 0 13 13"><path d="M3.5 0.5H12.5V9.5H3.5Z M0.5 3.5V12.5H9.5" stroke="#afb1b3" fill="none"/></svg>
<div class="txt" style="left:24px;top:654px">Localized IntelliJ IDEA 2021.3.3 is available // Switch and restart (31 minutes ago)</div>
<div class="txt" style="left:835px;top:654px;font-size:12px">20:1</div>
<div class="txt" style="left:871px;top:654px;font-size:12px">CRLF</div>
<div class="txt" style="left:911px;top:654px;font-size:12px">UTF-8</div>
<div class="txt" style="left:957px;top:654px;font-size:12px">4 spaces</div>
<svg class="a" style="left:1018px;top:655px" width="13" height="13" viewBox="0 0 13 13"><path d="M1.6 6.5V3.6A2.6 2.6 0 0 1 6.8 3.6V6.5" stroke="#afb1b3" stroke-width="1.4" fill="none"/><rect x="4" y="6" width="8" height="6" fill="#afb1b3"/></svg>
<svg class="a" style="left:1041px;top:654px" width="19" height="17" viewBox="0 0 19 17"><path d="M8 1C12 1 15 3.5 15 6.5C15 9.5 12 12 8 12C5 12 3 11.5 2 10C0.8 8.8 1 7.5 1 6.5C1 3.5 4 1 8 1Z" fill="#afb1b3"/><path d="M6.3 4.8A1.8 1.8 0 1 1 8.5 6.5C8 6.8 8 7.3 8 8" stroke="#3c3f41" stroke-width="1.2" fill="none"/><rect x="7.4" y="9" width="1.3" height="1.3" fill="#3c3f41"/><circle cx="13.5" cy="12" r="4.6" fill="#3c3f41"/><circle cx="13.5" cy="12" r="3.3" fill="none" stroke="#afb1b3" stroke-width="1.8" stroke-dasharray="1.6 1"/><circle cx="13.5" cy="12" r="2.5" fill="none" stroke="#afb1b3" stroke-width="1"/></svg>
</body></html>
